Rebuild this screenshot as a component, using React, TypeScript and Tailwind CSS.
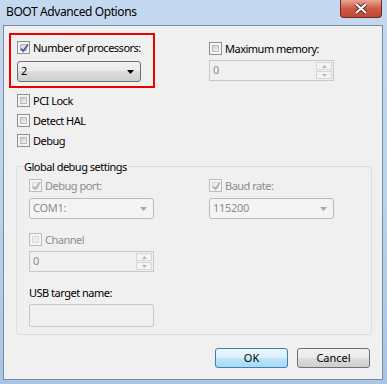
import React from "react";

const font = { fontFamily: '"Noto Sans", "Open Sans", sans-serif' };

function Check({ checked, disabled }: { checked?: boolean; disabled?: boolean }) {
  return (
    <span
      className={
        disabled
          ? "relative w-[13px] h-[13px] shrink-0 border border-[#bcbcbc] bg-[#f4f4f4] p-[2px]"
          : "relative w-[13px] h-[13px] shrink-0 border border-[#8e8f8f] bg-[#f4f4f4] p-[2px]"
      }
    >
      <span
        className={
          disabled
            ? "block w-full h-full bg-[#ececec] border border-[#dadada]"
            : "block w-full h-full bg-gradient-to-br from-[#c9cdd3] to-[#f5f6f7] border border-[#b8bcc2]"
        }
      />
      {checked && (
        <svg className="absolute left-[1px] top-[1px]" width="11" height="11" viewBox="0 0 11 11">
          <path
            d="M2 5.5 L4.3 8 L9 1.5"
            fill="none"
            stroke={disabled ? "#b4b4b4" : "#4a5f97"}
            strokeWidth="1.8"
          />
        </svg>
      )}
    </span>
  );
}

function CheckRow({ label, checked, disabled }: { label: string; checked?: boolean; disabled?: boolean }) {
  return (
    <div className="flex items-center h-[13px] gap-[3px]">
      <Check checked={checked} disabled={disabled} />
      <span
        className={
          disabled
            ? "whitespace-nowrap text-[11px] tracking-[-0.5px] leading-[13px] text-[#8d8d8d]"
            : "whitespace-nowrap text-[11px] tracking-[-0.5px] leading-[13px] text-black"
        }
      >
        {label}
      </span>
    </div>
  );
}

function DisabledSelect({ value }: { value: string }) {
  return (
    <div className="w-[125px] h-[21px] rounded-[3px] border border-[#b8babc] bg-[#f4f4f4] flex items-center justify-between pl-[3px] pr-[6px]">
      <span className="text-[11px] tracking-[-0.3px] text-[#8d8d8d]">{value}</span>
      <svg width="7" height="4" viewBox="0 0 7 4">
        <path d="M0 0 H7 L3.5 4 Z" fill="#a8a8a8" />
      </svg>
    </div>
  );
}

function DisabledSpin({ value }: { value: string }) {
  return (
    <div className="w-[125px] h-[21px] border border-[#c6c8ca] bg-[#f0f0f0] flex items-center justify-between pl-[3px] pr-[1px]">
      <span className="text-[11px] text-[#8d8d8d]">{value}</span>
      <div className="flex flex-col w-[16px] h-[17px] gap-[1px]">
        <div className="flex-1 border border-[#d6d6d6] bg-[#f4f4f4] flex items-center justify-center">
          <svg width="5" height="3" viewBox="0 0 5 3">
            <path d="M0 3 H5 L2.5 0 Z" fill="#b4b4b4" />
          </svg>
        </div>
        <div className="flex-1 border border-[#d6d6d6] bg-[#f4f4f4] flex items-center justify-center">
          <svg width="5" height="3" viewBox="0 0 5 3">
            <path d="M0 0 H5 L2.5 3 Z" fill="#b4b4b4" />
          </svg>
        </div>
      </div>
    </div>
  );
}

export default function App() {
  return (
    <div
      className="w-[387px] h-[384px] flex flex-col bg-gradient-to-b from-[#c4d8ef] via-[#bcd3ec] to-[#a9c4e4] overflow-hidden"
      style={font}
    >
      {/* Title bar */}
      <div className="h-[25px] flex items-start justify-between shrink-0">
        <span className="pl-[6px] pt-[4px] whitespace-nowrap text-[12px] tracking-[-0.4px] leading-[16px] text-black">
          BOOT Advanced Options
        </span>
        <div className="mr-[5px] w-[42px] h-[18px] rounded-b-[4px] border border-t-0 border-[#6e2a22] bg-gradient-to-b from-[#e7a595] via-[#cf5a46] to-[#c24632] flex items-center justify-center">
          <svg width="14" height="11" viewBox="0 0 14 11">
            <path d="M2 1 L12 10 M12 1 L2 10" stroke="#5a2a24" strokeWidth="4" />
            <path d="M2 1 L12 10 M12 1 L2 10" stroke="#ffffff" strokeWidth="2.2" />
          </svg>
        </div>
      </div>

      {/* Client area */}
      <div className="mx-[3px] w-[380px] h-[355px] border border-[#7b8a9c] bg-[#f0f0f0] flex flex-col shrink-0">
        {/* top row */}
        <div className="flex pl-[5px] pt-[7px]">
          <div className="w-[146px] h-[55px] border-2 border-[#ee0000] pl-[6px] pt-[6px] flex flex-col">
            <CheckRow label="Number of processors:" checked />
            <div className="mt-[7px] w-[124px] h-[21px] rounded-[3px] border border-[#707070] bg-[linear-gradient(to_bottom,#f2f2f2_0%,#ebebeb_50%,#dddddd_50%,#cfcfcf_100%)] flex items-center justify-between pl-[3px] pr-[6px]">
              <span className="text-[11px] text-black">2</span>
              <svg width="7" height="4" viewBox="0 0 7 4">
                <path d="M0 0 H7 L3.5 4 Z" fill="#000" />
              </svg>
            </div>
          </div>
          <div className="ml-[54px] pt-[9px] flex flex-col">
            <CheckRow label="Maximum memory:" />
            <div className="mt-[5px]">
              <DisabledSpin value="0" />
            </div>
          </div>
        </div>

        {/* checkbox list */}
        <div className="pl-[13px] pt-[6px] flex flex-col gap-[7px]">
          <CheckRow label="PCI Lock" />
          <CheckRow label="Detect HAL" />
          <CheckRow label="Debug" />
        </div>

        {/* group box */}
        <fieldset className="ml-[12px] mt-[12px] w-[356px] h-[176px] border border-[#d5dfe5] rounded-[3px]">
          <legend className="ml-[6px] px-[1px] whitespace-nowrap text-[11px] tracking-[-0.5px] leading-[15px] text-black">
            Global debug settings
          </legend>
          <div className="pl-[12px] pt-[5px] flex">
            <div className="flex flex-col w-[180px]">
              <CheckRow label="Debug port:" checked disabled />
              <div className="mt-[6px]">
                <DisabledSelect value="COM1:" />
              </div>
              <div className="mt-[14px]">
                <CheckRow label="Channel" disabled />
              </div>
              <div className="mt-[5px]">
                <DisabledSpin value="0" />
              </div>
              <div className="mt-[13px] whitespace-nowrap text-[11px] tracking-[-0.5px] leading-[15px] text-black">
                USB target name:
              </div>
              <div className="mt-[4px] w-[125px] h-[23px] rounded-[2px] border border-[#c6c8ca] bg-[#f0f0f0]" />
            </div>
            <div className="flex flex-col">
              <CheckRow label="Baud rate:" checked disabled />
              <div className="mt-[6px]">
                <DisabledSelect value="115200" />
              </div>
            </div>
          </div>
        </fieldset>

        {/* buttons */}
        <div className="flex justify-end gap-[9px] pr-[12px] mt-[13px]">
          <button className="w-[73px] h-[20px] rounded-[3px] border border-[#3c7fb1] bg-[linear-gradient(to_bottom,#eaf6fd_0%,#d9f0fc_50%,#bee6fd_50%,#a7d9f5_100%)] text-[11px] leading-[18px] text-black">
            OK
          </button>
          <button className="w-[73px] h-[20px] rounded-[3px] border border-[#707070] bg-[linear-gradient(to_bottom,#f2f2f2_0%,#ebebeb_50%,#dddddd_50%,#cfcfcf_100%)] text-[11px] leading-[18px] text-black">
            Cancel
          </button>
        </div>
      </div>
    </div>
  );
}
